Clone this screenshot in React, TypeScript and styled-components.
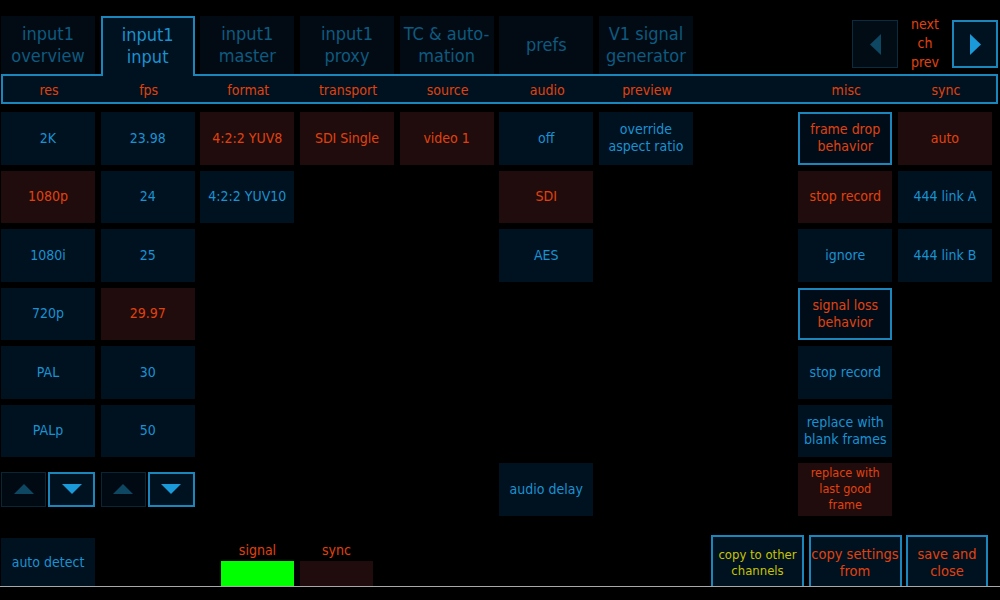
import React from 'react';
import styled, { createGlobalStyle, css } from 'styled-components';

const BLUE = '#1a92d2';
const DIM_BLUE = '#0e5a80';
const ORANGE = '#e0420e';
const BORDER = '#1a86bc';
const CELL_BG = '#00111f';
const SEL_BG = '#200c0c';

const GlobalStyle = createGlobalStyle`
  html, body {
    margin: 0;
    padding: 0;
    background: #000;
  }
  body {
    font-family: "DejaVu Sans Condensed", "DejaVu Sans", sans-serif;
  }
`;

const Screen = styled.div`
  width: 1000px;
  height: 600px;
  background: #000;
  overflow: hidden;
  display: flex;
  flex-direction: column;
`;

const TopBar = styled.div`
  height: 58px;
  padding-top: 16px;
  display: flex;
  align-items: flex-start;
`;

const Tabs = styled.div`
  display: grid;
  grid-template-columns: repeat(7, 94px);
  grid-template-rows: 58px;
  column-gap: 5.67px;
  margin-left: 1px;
  align-items: start;
`;

const Tab = styled.div<{ $active?: boolean }>`
  box-sizing: border-box;
  height: 58px;
  display: flex;
  align-items: center;
  justify-content: center;
  text-align: center;
  font-size: 18px;
  line-height: 22px;
  background: #020b13;
  color: ${DIM_BLUE};
  white-space: pre-line;

  ${p =>
    p.$active &&
    css`
      position: relative;
      z-index: 2;
      height: 60px;
      padding-bottom: 2px;
      background: ${CELL_BG};
      color: ${BLUE};
      border: 2px solid ${BORDER};
      border-bottom: none;
    `}
`;

const ChannelNav = styled.div`
  margin-left: auto;
  margin-right: 2px;
  margin-top: 4px;
  display: flex;
  align-items: stretch;
`;

const NavButton = styled.div<{ $enabled?: boolean }>`
  box-sizing: border-box;
  width: 46px;
  height: 48px;
  display: flex;
  align-items: center;
  justify-content: center;
  background: ${p => (p.$enabled ? CELL_BG : '#020c14')};
  border: ${p => (p.$enabled ? `2px solid ${BORDER}` : '1px solid #0b2c3e')};
`;

const NavLabel = styled.div`
  width: 54px;
  text-align: center;
  font-size: 14px;
  line-height: 19px;
  color: ${ORANGE};
  margin-top: -5px;
`;

const HeaderBar = styled.div`
  box-sizing: border-box;
  margin: 0 2px 0 1px;
  height: 30px;
  border: 2px solid ${BORDER};
  background: ${CELL_BG};
  display: grid;
  grid-template-columns: repeat(10, 94px);
  column-gap: 5.67px;
  align-items: center;
`;

const HeaderLabel = styled.div`
  margin-left: -2px;
  padding-top: 2px;
  text-align: center;
  font-size: 14px;
  color: ${ORANGE};
`;

const Board = styled.div`
  margin: 8px 0 0 1px;
  display: grid;
  grid-template-columns: repeat(10, 94px);
  grid-template-rows: repeat(7, 52.5px);
  column-gap: 5.67px;
  row-gap: 6px;
`;

type Variant = 'normal' | 'selected' | 'outlined';

const Cell = styled.div<{ $col: number; $row: number; $variant?: Variant; $small?: boolean }>`
  grid-column: ${p => p.$col};
  grid-row: ${p => p.$row};
  box-sizing: border-box;
  display: flex;
  align-items: center;
  justify-content: center;
  text-align: center;
  white-space: pre-line;
  font-size: ${p => (p.$small ? '12.5px' : '14px')};
  line-height: ${p => (p.$small ? '16px' : '17px')};
  background: ${CELL_BG};
  color: ${BLUE};

  ${p =>
    p.$variant === 'selected' &&
    css`
      background: ${SEL_BG};
      color: ${ORANGE};
    `}

  ${p =>
    p.$variant === 'outlined' &&
    css`
      background: #000d19;
      color: ${ORANGE};
      border: 2px solid ${BORDER};
    `}
`;

const StepperCell = styled.div<{ $col: number; $row: number }>`
  grid-column: ${p => p.$col};
  grid-row: ${p => p.$row};
  display: flex;
  align-items: center;
  gap: 2px;
`;

const StepButton = styled.div<{ $enabled?: boolean }>`
  box-sizing: border-box;
  flex: 1;
  height: 35px;
  display: flex;
  align-items: center;
  justify-content: center;
  background: ${p => (p.$enabled ? CELL_BG : '#010a12')};
  border: ${p => (p.$enabled ? `2px solid ${BORDER}` : '1px solid #0a2636')};
`;

const Footer = styled.div`
  height: 70.5px;
  display: flex;
  align-items: flex-end;
  border-bottom: 1px solid #a8a8a8;
`;

const AutoDetect = styled.div`
  width: 94px;
  height: 48px;
  margin-left: 1px;
  display: flex;
  align-items: center;
  justify-content: center;
  background: ${CELL_BG};
  color: ${BLUE};
  font-size: 14px;
`;

const StatusGroup = styled.div`
  margin-left: 126px;
  display: flex;
  gap: 6px;
`;

const Status = styled.div`
  width: 73px;
  display: flex;
  flex-direction: column;
  align-items: center;
`;

const StatusLabel = styled.div`
  font-size: 14px;
  line-height: 18px;
  margin-bottom: 2px;
  color: ${ORANGE};
`;

const Lamp = styled.div<{ $on?: boolean }>`
  width: 73px;
  height: 25px;
  background: ${p => (p.$on ? '#00ff00' : SEL_BG)};
`;

const Actions = styled.div`
  margin-left: auto;
  margin-right: 12px;
  display: flex;
  gap: 4.5px;
`;

const ActionButton = styled.div<{ $width: number; $tone: 'yellow' | 'orange' }>`
  box-sizing: border-box;
  width: ${p => p.$width}px;
  height: 51px;
  display: flex;
  align-items: center;
  justify-content: center;
  text-align: center;
  white-space: pre-line;
  background: ${CELL_BG};
  border: 2px solid ${BORDER};
  border-bottom: none;
  padding-top: 2px;
  ${p =>
    p.$tone === 'yellow'
      ? css`
          color: #c8c400;
          font-size: 13px;
          line-height: 16px;
        `
      : css`
          color: ${ORANGE};
          font-size: 14.5px;
          line-height: 17px;
          white-space: pre;
        `}
`;

const Triangle: React.FC<{ dir: 'up' | 'down' | 'left' | 'right'; color: string }> = ({ dir, color }) => {
  const points = {
    up: '0,10 10,0 20,10',
    down: '0,0 20,0 10,10',
    left: '10,0 10,20 0,10',
    right: '0,0 10,10 0,20',
  }[dir];
  const vertical = dir === 'up' || dir === 'down';
  return (
    <svg width={vertical ? 20 : 11} height={vertical ? 10 : 21} viewBox={vertical ? '0 0 20 10' : '0 0 10 20'} preserveAspectRatio="none">
      <polygon points={points} fill={color} />
    </svg>
  );
};

const tabs = [
  'input1\noverview',
  'input1\ninput',
  'input1\nmaster',
  'input1\nproxy',
  'TC & auto-\nmation',
  'prefs',
  'V1 signal\ngenerator',
];

const headers = ['res', 'fps', 'format', 'transport', 'source', 'audio', 'preview', '', 'misc', 'sync'];

type CellDef = { col: number; row: number; text: string; variant?: Variant; small?: boolean };

const cells: CellDef[] = [
  { col: 1, row: 1, text: '2K' },
  { col: 1, row: 2, text: '1080p', variant: 'selected' },
  { col: 1, row: 3, text: '1080i' },
  { col: 1, row: 4, text: '720p' },
  { col: 1, row: 5, text: 'PAL' },
  { col: 1, row: 6, text: 'PALp' },
  { col: 2, row: 1, text: '23.98' },
  { col: 2, row: 2, text: '24' },
  { col: 2, row: 3, text: '25' },
  { col: 2, row: 4, text: '29.97', variant: 'selected' },
  { col: 2, row: 5, text: '30' },
  { col: 2, row: 6, text: '50' },
  { col: 3, row: 1, text: '4:2:2 YUV8', variant: 'selected' },
  { col: 3, row: 2, text: '4:2:2 YUV10' },
  { col: 4, row: 1, text: 'SDI Single', variant: 'selected' },
  { col: 5, row: 1, text: 'video 1', variant: 'selected' },
  { col: 6, row: 1, text: 'off' },
  { col: 6, row: 2, text: 'SDI', variant: 'selected' },
  { col: 6, row: 3, text: 'AES' },
  { col: 6, row: 7, text: 'audio delay' },
  { col: 7, row: 1, text: 'override\naspect ratio' },
  { col: 9, row: 1, text: 'frame drop\nbehavior', variant: 'outlined' },
  { col: 9, row: 2, text: 'stop record', variant: 'selected' },
  { col: 9, row: 3, text: 'ignore' },
  { col: 9, row: 4, text: 'signal loss\nbehavior', variant: 'outlined' },
  { col: 9, row: 5, text: 'stop record' },
  { col: 9, row: 6, text: 'replace with\nblank frames' },
  { col: 9, row: 7, text: 'replace with\nlast good\nframe', variant: 'selected', small: true },
  { col: 10, row: 1, text: 'auto', variant: 'selected' },
  { col: 10, row: 2, text: '444 link A' },
  { col: 10, row: 3, text: '444 link B' },
];

const App: React.FC = () => {
  return (
    <Screen>
      <GlobalStyle />
      <TopBar>
        <Tabs>
          {tabs.map((t, i) => (
            <Tab key={t} $active={i === 1}>
              {t}
            </Tab>
          ))}
        </Tabs>
        <ChannelNav>
          <NavButton>
            <Triangle dir="left" color="#0d4762" />
          </NavButton>
          <NavLabel>
            next
            <br />
            ch
            <br />
            prev
          </NavLabel>
          <NavButton $enabled>
            <Triangle dir="right" color="#1a9ad8" />
          </NavButton>
        </ChannelNav>
      </TopBar>

      <HeaderBar>
        {headers.map((h, i) => (
          <HeaderLabel key={i}>{h}</HeaderLabel>
        ))}
      </HeaderBar>

      <Board>
        {cells.map(c => (
          <Cell key={`${c.col}-${c.row}`} $col={c.col} $row={c.row} $variant={c.variant} $small={c.small}>
            {c.text}
          </Cell>
        ))}
        {[1, 2].map(col => (
          <StepperCell key={col} $col={col} $row={7}>
            <StepButton>
              <Triangle dir="up" color="#0d4762" />
            </StepButton>
            <StepButton $enabled>
              <Triangle dir="down" color="#1a9ad8" />
            </StepButton>
          </StepperCell>
        ))}
      </Board>

      <Footer>
        <AutoDetect>auto detect</AutoDetect>
        <StatusGroup>
          <Status>
            <StatusLabel>signal</StatusLabel>
            <Lamp $on />
          </Status>
          <Status>
            <StatusLabel>sync</StatusLabel>
            <Lamp />
          </Status>
        </StatusGroup>
        <Actions>
          <ActionButton $width={93} $tone="yellow">{'copy to other\nchannels'}</ActionButton>
          <ActionButton $width={93} $tone="orange">{'copy settings\nfrom'}</ActionButton>
          <ActionButton $width={82} $tone="orange">{'save and\nclose'}</ActionButton>
        </Actions>
      </Footer>
    </Screen>
  );
};

export default App;
